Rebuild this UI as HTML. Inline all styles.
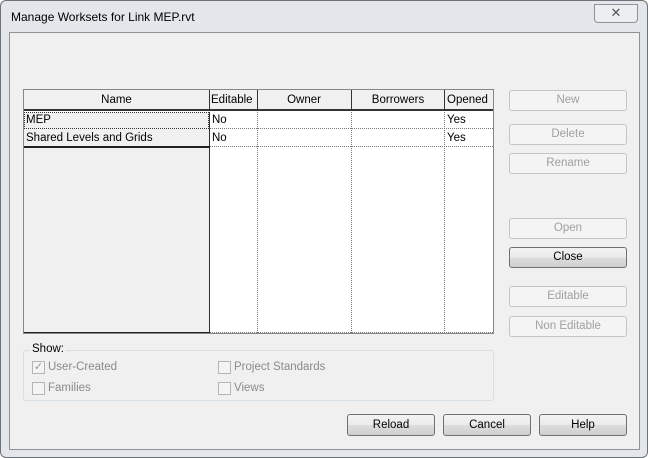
<!DOCTYPE html>
<html><head><style>
*{box-sizing:border-box;margin:0;padding:0}
body{width:648px;height:458px;background:#fff;font-family:"Liberation Sans",sans-serif;font-size:11.5px;color:#000;position:relative;overflow:hidden}
.win{position:absolute;left:0;top:0;width:648px;height:458px;background:#e3e6ea;border:1px solid #6e7378;border-radius:6px}
.title{position:absolute;left:11px;top:10px;font-size:12px}
.x{position:absolute;left:594px;top:4px;width:44px;height:19px;border:1px solid #8d9297;border-radius:0 0 4px 4px;background:#eceef0;text-align:center;font-size:13px;color:#555;line-height:16px}
.content{position:absolute;left:9px;top:32px;width:631px;height:418px;background:#f0f0f0;border:1px solid #8e9298}
.a{position:absolute}
.grid{left:23px;top:89px;width:471px;height:245px;border:1px solid #828790;background:#fff}
.btn{position:absolute;width:118px;height:21px;border:1px solid #c4c4c4;border-radius:3px;background:#f4f4f4;color:#a0a0a0;text-align:center;line-height:19px}
.en{border-color:#707070;background:linear-gradient(#f2f2f2,#ebebeb 50%,#dddddd 51%,#cfcfcf);color:#000}
.cb{position:absolute;width:13px;height:13px;border:1px solid #b5b5b5;background:#f4f4f4}
.lbl{position:absolute;color:#8a8a8a}
</style></head><body>
<div class="win"></div>
<div class="title">Manage Worksets for Link MEP.rvt</div>
<div class="x">✕</div>
<div class="content"></div>
<div class="a grid"></div>
<div class="a" style="left:24px;top:90px;width:469px;height:21px;background:#f0f0f0;border-bottom:2px solid #333"></div>
<div class="a" style="left:24px;top:94px;width:185px;text-align:center">Name</div>
<div class="a" style="left:211px;top:94px">Editable</div>
<div class="a" style="left:257px;top:94px;width:94px;text-align:center">Owner</div>
<div class="a" style="left:351px;top:94px;width:94px;text-align:center">Borrowers</div>
<div class="a" style="left:447px;top:94px">Opened</div>
<div class="a" style="left:209px;top:90px;width:1px;height:20px;background:#333"></div>
<div class="a" style="left:257px;top:90px;width:1px;height:20px;background:#333"></div>
<div class="a" style="left:351px;top:90px;width:1px;height:20px;background:#333"></div>
<div class="a" style="left:444px;top:90px;width:1px;height:20px;background:#333"></div>
<div class="a" style="left:24px;top:112px;width:185px;height:221px;background:#f0f0f0"></div>
<div class="a" style="left:209px;top:112px;width:1px;height:221px;background:#333"></div>
<div class="a" style="left:24px;top:146px;width:186px;height:2px;background:#222"></div>
<div class="a" style="left:24px;top:332px;width:186px;height:1px;background:#222"></div>
<div class="a" style="left:257px;top:112px;height:221px;border-left:1px dotted #777"></div>
<div class="a" style="left:351px;top:112px;height:221px;border-left:1px dotted #777"></div>
<div class="a" style="left:444px;top:112px;height:221px;border-left:1px dotted #777"></div>
<div class="a" style="left:210px;top:128px;width:283px;border-top:1px dotted #777"></div>
<div class="a" style="left:210px;top:146px;width:283px;border-top:1px dotted #777"></div>
<div class="a" style="left:210px;top:332px;width:283px;border-top:1px dotted #777"></div>
<div class="a" style="left:24px;top:112px;width:185px;height:17px;border:1px dotted #333"></div>
<div class="a" style="left:26px;top:114px">MEP</div>
<div class="a" style="left:212px;top:114px">No</div>
<div class="a" style="left:447px;top:114px">Yes</div>
<div class="a" style="left:26px;top:132px">Shared Levels and Grids</div>
<div class="a" style="left:212px;top:132px">No</div>
<div class="a" style="left:447px;top:132px">Yes</div>
<div class="btn" style="left:509px;top:90px">New</div>
<div class="btn" style="left:509px;top:124px">Delete</div>
<div class="btn" style="left:509px;top:153px">Rename</div>
<div class="btn" style="left:509px;top:218px">Open</div>
<div class="btn en" style="left:509px;top:247px">Close</div>
<div class="btn" style="left:509px;top:286px">Editable</div>
<div class="btn" style="left:509px;top:316px">Non Editable</div>
<div class="a" style="left:23px;top:350px;width:471px;height:51px;border:1px solid #d5dfe5;border-radius:3px"></div>
<div class="a" style="left:30px;top:343px;background:#f0f0f0;padding:0 2px">Show:</div>
<div class="cb" style="left:32px;top:361px;color:#999;font-size:11px;line-height:11px;text-align:center">✓</div>
<div class="lbl" style="left:48px;top:361px">User-Created</div>
<div class="cb" style="left:32px;top:382px"></div>
<div class="lbl" style="left:48px;top:382px">Families</div>
<div class="cb" style="left:218px;top:361px"></div>
<div class="lbl" style="left:234px;top:361px">Project Standards</div>
<div class="cb" style="left:218px;top:382px"></div>
<div class="lbl" style="left:234px;top:382px">Views</div>
<div class="btn en" style="left:347px;top:414px;width:88px;height:22px;line-height:20px">Reload</div>
<div class="btn en" style="left:443px;top:414px;width:88px;height:22px;line-height:20px">Cancel</div>
<div class="btn en" style="left:539px;top:414px;width:88px;height:22px;line-height:20px">Help</div>
</body></html>
